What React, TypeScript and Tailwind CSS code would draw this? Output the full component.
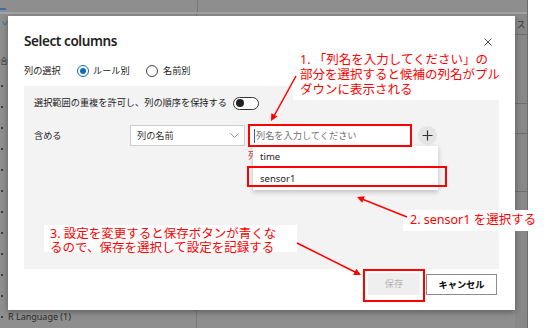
import React from "react";

const bulletCount = 11;

export default function App() {
  return (
    <div className="relative w-[554px] h-[328px] overflow-hidden flex font-['Noto_Sans','Noto_Sans_CJK_JP',sans-serif] text-[#222]">
      {/* dimmed background application */}
      <div className="w-[528px] h-full bg-[#8e8e8e] flex flex-col border-r border-[#6c6c6c]">
        <div className="h-[14px] shrink-0 flex border-b-2 border-[#a2a2a2]">
          <div className="w-[6px] flex flex-col">
            <div className="mt-[8px] h-[2px] bg-[#3d6ca3]" />
          </div>
          <div className="w-[191px]" />
          <div className="w-px bg-[#787878]" />
          <div className="flex-1" />
        </div>
        <div className="flex flex-1 min-h-0">
          <div className="w-[197px] flex flex-col border-r border-[#787878]">
            <div className="mt-[4px] h-[10px] flex items-center pl-[2px]">
              <svg width="6" height="5" viewBox="0 0 6 5">
                <path d="M0.5 0.5 L3 4 L5.5 0.5" fill="none" stroke="#3d6ca3" strokeWidth="1" />
              </svg>
            </div>
            <div className="mt-[27px] h-[12px] flex items-center text-[8px] leading-none text-[#333]">合</div>
            <div className="mt-[8px] flex flex-col">
              {Array.from({ length: bulletCount }).map((_, i) => (
                <div key={i} className="h-[21px] flex items-center">
                  <div className="w-[2px] h-[2px] rounded-full bg-[#222] ml-[1px]" />
                </div>
              ))}
              <div className="h-[21px] flex items-center">
                <div className="w-[2px] h-[2px] rounded-full bg-[#222] ml-[1px]" />
                <span className="ml-[5px] text-[9px] leading-none text-[#2a2a2a] whitespace-nowrap">R Language (1)</span>
              </div>
            </div>
          </div>
          <div className="flex-1" />
          <div className="w-[12px] flex flex-col bg-[#888]">
            <div className="h-[21px] border-b border-[#6e6e6e] flex items-center justify-center text-[9px] leading-none text-[#333]">ス</div>
            <div className="h-[69px] border-b border-[#6e6e6e]" />
            <div className="h-[30px] border-b border-[#6e6e6e]" />
            <div className="h-[58px] border-b border-[#6e6e6e]" />
          </div>
        </div>
      </div>
      <div className="flex-1 bg-white" />

      {/* dialog */}
      <div className="absolute left-[8px] top-[16px] w-[507px] h-[294px] bg-white shadow-[0_2px_6px_rgba(0,0,0,0.35)] flex flex-col">
        <div className="pt-[17px] px-4 flex flex-col">
          <div className="h-[18px] flex items-center justify-between pr-[7px]">
            <span className="text-[13.5px] font-semibold leading-none text-[#222] tracking-[-0.4px]">Select columns</span>
            <svg width="8" height="8" viewBox="0 0 8 8">
              <path d="M0.5 0.5 L7.5 7.5 M7.5 0.5 L0.5 7.5" stroke="#555" strokeWidth="1" />
            </svg>
          </div>
          <div className="mt-[13px] h-[14px] flex items-center text-[9.2px] leading-none">
            <span className="w-[53px]">列の選択</span>
            <div className="w-[12px] h-[12px] rounded-full border border-[#0f6cbd] flex items-center justify-center">
              <div className="w-[6px] h-[6px] rounded-full bg-[#0f6cbd]" />
            </div>
            <span className="ml-[4px] w-[37px]">ルール別</span>
            <div className="ml-[16px] w-[12px] h-[12px] rounded-full border border-[#444]" />
            <span className="ml-[5px]">名前別</span>
          </div>
        </div>
        <div className="ml-4 mt-[8px] w-[475px] h-[183px] bg-[#f3f3f3] pl-[10px] flex flex-col">
          <div className="mt-[10px] h-[14px] flex items-center text-[9.2px] leading-none">
            <span>選択範囲の重複を許可し、列の順序を保持する</span>
            <div className="ml-[6px] w-[26px] h-[13px] rounded-full border border-[#333] bg-white flex items-center pl-[2px]">
              <div className="w-[8px] h-[8px] rounded-full bg-[#222]" />
            </div>
          </div>
          <div className="mt-[15px] h-[21px] flex items-center text-[9.2px] leading-none">
            <span className="w-[96px]">含める</span>
            <div className="w-[115px] h-[21px] bg-white border border-[#cfcfcf] flex items-center justify-between pl-[6px] pr-[5px]">
              <span className="text-[#333]">列の名前</span>
              <svg width="9" height="5" viewBox="0 0 9 5">
                <path d="M0.5 0.5 L4.5 4.5 L8.5 0.5" fill="none" stroke="#8a8a8a" strokeWidth="0.9" />
              </svg>
            </div>
            <div className="ml-[5px] w-[160px] h-[20px] bg-white flex items-center">
              <div className="ml-[4px] w-px h-[14px] bg-[#2b5fa8]" />
              <span className="ml-[1px] text-[#707070]">列名を入力してください</span>
            </div>
            <div className="ml-[8px] w-[19px] h-[19px] rounded-full bg-[#e4e4e4] flex items-center justify-center">
              <svg width="11" height="11" viewBox="0 0 11 11">
                <path d="M5.5 0.5 V10.5 M0.5 5.5 H10.5" stroke="#333" strokeWidth="1.2" />
              </svg>
            </div>
          </div>
        </div>
        <div className="mt-[4px] h-[22px] flex items-end justify-end pr-[18px] text-[9.2px] leading-none">
          <div className="w-[52px] h-[22px] bg-[#efefef] text-[#b4b4b4] flex items-center justify-center">保存</div>
          <div className="ml-[6px] w-[71px] h-[21px] border border-[#8c8c8c] bg-white font-bold text-black flex items-center justify-center">キャンセル</div>
        </div>
      </div>

      {/* red validation text, mostly hidden by the suggestion list */}
      <div className="absolute left-[248px] top-[151px] w-[5px] h-[10px] overflow-hidden text-[9.2px] leading-none text-[#d83b3b] whitespace-nowrap">列</div>

      {/* suggestion list */}
      <div className="absolute left-[253px] top-[146px] w-[185px] h-[44px] bg-white shadow-[0_2px_5px_rgba(0,0,0,0.22)] flex flex-col text-[9.5px] leading-none text-[#222]">
        <div className="h-[22px] flex items-center pl-[7px]">time</div>
        <div className="h-[22px] flex items-center pl-[7px]">sensor1</div>
      </div>

      {/* annotation boxes */}
      <div className="absolute left-[293px] top-[50px] w-[212px] h-[50px] bg-white pl-[7px] pt-[2px] text-[12.5px] leading-[15px] text-[#ff0000] whitespace-nowrap">
        <div>1. 「列名を入力してください」の</div>
        <div>部分を選択すると候補の列名がプル</div>
        <div>ダウンに表示される</div>
      </div>
      <div className="absolute left-[403px] top-[210px] w-[151px] h-[21px] bg-white pl-[7px] flex items-center text-[12.5px] leading-none text-[#ff0000] whitespace-nowrap">
        2. sensor1 を選択する
      </div>
      <div className="absolute left-[44px] top-[225px] w-[253px] h-[27px] bg-white pl-[6px] pt-[2px] text-[12.5px] leading-[14px] text-[#ff0000] whitespace-nowrap">
        <div>3. 設定を変更すると保存ボタンが青くな</div>
        <div>るので、保存を選択して設定を記録する</div>
      </div>

      {/* red highlight rectangles */}
      <div className="absolute left-[248px] top-[124px] w-[164px] h-[23px] border-2 border-[#ff0000]" />
      <div className="absolute left-[247px] top-[166px] w-[200px] h-[21px] border-2 border-[#ff0000]" />
      <div className="absolute left-[363px] top-[269px] w-[62px] h-[33px] border-2 border-[#ff0000]" />

      {/* arrows */}
      <svg className="absolute left-0 top-0 pointer-events-none" width="554" height="328" viewBox="0 0 554 328">
        <line x1="296" y1="76" x2="274" y2="116" stroke="#ff0000" strokeWidth="1.5" />
        <polygon points="271,121 277.5,116.6 271.3,113.2" fill="#ff0000" />
        <line x1="407" y1="217" x2="362" y2="199" stroke="#ff0000" strokeWidth="1.5" />
        <polygon points="357,197 364.8,196.3 362.2,202.8" fill="#ff0000" />
        <line x1="297" y1="243" x2="356" y2="272.5" stroke="#ff0000" strokeWidth="1.5" />
        <polygon points="361,275 353.2,275 356.3,268.7" fill="#ff0000" />
      </svg>
    </div>
  );
}
